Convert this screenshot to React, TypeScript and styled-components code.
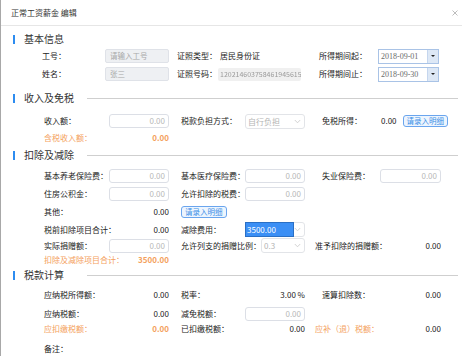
import React from "react";
import styled, { createGlobalStyle, css } from "styled-components";

const Global = createGlobalStyle`
  html, body { margin: 0; padding: 0; background: #ffffff; }
  body { font-family: "Noto Sans CJK SC", "Noto Sans", sans-serif; }
  * { box-sizing: border-box; }
`;

const ORANGE = "#f4a15e";
const BLUE = "#3a8ee6";
const TEXT = "#222";

const Dialog = styled.div`
  width: 462px;
  height: 356px;
  overflow: hidden;
  background: #fff;
  border-left: 1px solid #a8a8a8;
  color: ${TEXT};
  font-size: 8px;
`;

const Header = styled.div`
  height: 26px;
  border-bottom: 1px solid #e6e6e6;
  display: flex;
  align-items: center;
  justify-content: space-between;
  padding: 0 4px 0 10px;
  font-size: 8px;
  color: #333;
`;

const Close = styled.svg`
  width: 6px;
  height: 6px;
`;

const SectionTitle = styled.div<{ $mt: number }>`
  display: flex;
  align-items: center;
  height: 14px;
  margin-top: ${(p) => p.$mt}px;
  padding-left: 12px;
  padding-right: 4px;
`;

const Bar = styled.span`
  width: 2px;
  height: 9px;
  background: #2d8cf0;
  margin-right: 9px;
`;

const TitleText = styled.span`
  width: 63px;
  font-size: 10px;
  line-height: 14px;
  color: #333;
  white-space: nowrap;
`;

const Line = styled.span`
  flex: 1;
  height: 1px;
  background: #cfcfcf;
`;

const InfoRow = styled.div<{ $h: number; $mt?: number }>`
  display: grid;
  grid-template-columns: 104px 64px 49px 86px 74px 61px;
  align-items: center;
  height: ${(p) => p.$h}px;
  margin-top: ${(p) => p.$mt ?? 0}px;
`;

const FormRow = styled.div<{ $h: number; $mt?: number }>`
  display: grid;
  grid-template-columns: 108px 60px 76px 60px 75px 61px;
  align-items: center;
  height: ${(p) => p.$h}px;
  margin-top: ${(p) => p.$mt ?? 0}px;
`;

const Label = styled.span<{ $indent: number; $orange?: boolean }>`
  padding-left: ${(p) => p.$indent}px;
  white-space: nowrap;
  font-size: 8px;
  line-height: 12px;
  color: ${(p) => (p.$orange ? ORANGE : TEXT)};
`;

const Value = styled.span<{ $orange?: boolean; $bold?: boolean }>`
  text-align: right;
  white-space: nowrap;
  font-size: 8px;
  line-height: 12px;
  color: ${(p) => (p.$orange ? ORANGE : TEXT)};
  font-weight: ${(p) => (p.$bold ? 700 : 400)};
`;

const NumberInput = styled.div`
  height: 14px;
  border: 1px solid #dcdfe6;
  border-radius: 3px;
  background: #fff;
  text-align: right;
  padding-right: 3px;
  color: #b8b8b8;
  font-size: 8px;
  line-height: 12px;
`;

const DisabledInput = styled.div`
  height: 14px;
  border: 1px solid #dfe2e8;
  border-radius: 2px;
  background: #eef0f3;
  padding-left: 4px;
  color: #a8a8a8;
  font-size: 7.5px;
  line-height: 12px;
`;

const IdBox = styled.div`
  height: 13px;
  margin-right: 3px;
  border-radius: 2px;
  background: #f0f0f0;
  padding-left: 2px;
  overflow: hidden;
  white-space: nowrap;
  color: #9a9a9a;
  font-size: 7px;
  line-height: 13px;
  filter: blur(0.6px);
`;

const DateBox = styled.div`
  height: 15px;
  border: 1px solid #a9c3e6;
  background: #fff;
  display: flex;
  align-items: stretch;
`;

const DateText = styled.span`
  flex: 1;
  padding-left: 2px;
  font-family: "Liberation Serif", "DejaVu Serif", serif;
  font-size: 8px;
  line-height: 13px;
  color: #6b6b6b;
`;

const DateButton = styled.span`
  width: 11px;
  background: #dde8f6;
  border-left: 1px solid #c5d6ee;
  display: flex;
  align-items: center;
  justify-content: center;
`;

const Triangle = styled.span`
  width: 0;
  height: 0;
  border-left: 2px solid transparent;
  border-right: 2px solid transparent;
  border-top: 2px solid #222;
`;

const SelectBox = styled.div<{ $w?: number }>`
  height: 15px;
  ${(p) => p.$w && css`width: ${p.$w}px; justify-self: end;`}
  border: 1px solid #e2e4e8;
  border-radius: 3px;
  background: #fff;
  display: flex;
  align-items: center;
  justify-content: space-between;
  padding: 0 3px 0 2px;
  color: #b4b4b4;
  font-size: 8px;
  line-height: 13px;
`;

const Chevron = styled.svg`
  width: 7px;
  height: 5px;
`;

const Highlight = styled.span`
  width: 49px;
  height: 15px;
  margin-left: -3px;
  background: #3b8ff5;
  border: 1px solid #2a6fc4;
  color: #fff;
  font-size: 8px;
  line-height: 13px;
  padding-left: 1px;
`;

const DetailButton = styled.button`
  height: 12px;
  padding: 0 3px;
  border: 1px solid #6aa5ee;
  border-radius: 3px;
  background: #edf5fe;
  color: ${BLUE};
  font-family: inherit;
  font-size: 7.5px;
  line-height: 10px;
  white-space: nowrap;
  justify-self: start;
`;

const Inline = styled.div<{ $span: number; $indent: number }>`
  grid-column: span ${(p) => p.$span};
  display: flex;
  align-items: center;
  justify-content: space-between;
  padding-left: ${(p) => p.$indent}px;
`;

const Tail = styled.div`
  display: flex;
  align-items: center;
  gap: 6px;
  padding-left: 1px;
  white-space: nowrap;
`;

const Empty = styled.span``;

const Down = () => (
  <Chevron viewBox="0 0 7 5">
    <path d="M0.8 1 L3.5 3.8 L6.2 1" fill="none" stroke="#c8c8c8" strokeWidth="0.8" />
  </Chevron>
);

const Section = ({ title, mt, line = true }: { title: string; mt: number; line?: boolean }) => (
  <SectionTitle $mt={mt}>
    <Bar />
    <TitleText>{title}</TitleText>
    {line && <Line />}
  </SectionTitle>
);

const DateField = ({ v }: { v: string }) => (
  <DateBox>
    <DateText>{v}</DateText>
    <DateButton>
      <Triangle />
    </DateButton>
  </DateBox>
);

export default function App() {
  return (
    <>
      <Global />
      <Dialog>
        <Header>
          <span>正常工资薪金 编辑</span>
          <Close viewBox="0 0 6 6">
            <path d="M0.5 0.5 L5.5 5.5 M5.5 0.5 L0.5 5.5" stroke="#bdbdbd" strokeWidth="1" />
          </Close>
        </Header>

        <Section title="基本信息" mt={6} line={false} />
        <InfoRow $h={18} $mt={1}>
          <Label $indent={41}>工号：</Label>
          <DisabledInput>请输入工号</DisabledInput>
          <Label $indent={8}>证照类型：</Label>
          <Label $indent={2}>居民身份证</Label>
          <Label $indent={15}>所得期间起：</Label>
          <DateField v="2018-09-01" />
        </InfoRow>
        <InfoRow $h={18}>
          <Label $indent={41}>姓名：</Label>
          <DisabledInput>张三</DisabledInput>
          <Label $indent={8}>证照号码：</Label>
          <IdBox>120214603758461945615</IdBox>
          <Label $indent={15}>所得期间止：</Label>
          <DateField v="2018-09-30" />
        </InfoRow>

        <Section title="收入及免税" mt={8} />
        <FormRow $h={18} $mt={7}>
          <Label $indent={43}>收入额：</Label>
          <NumberInput>0.00</NumberInput>
          <Label $indent={12}>税款负担方式：</Label>
          <SelectBox>
            <span>自行负担</span>
            <Down />
          </SelectBox>
          <Label $indent={17}>免税所得：</Label>
          <Tail>
            <Value>0.00</Value>
            <DetailButton>请录入明细</DetailButton>
          </Tail>
        </FormRow>
        <FormRow $h={16}>
          <Label $indent={43} $orange>含税收入额：</Label>
          <Value $orange $bold>0.00</Value>
        </FormRow>

        <Section title="扣除及减除" mt={2} />
        <FormRow $h={18} $mt={5}>
          <Label $indent={43}>基本养老保险费：</Label>
          <NumberInput>0.00</NumberInput>
          <Label $indent={12}>基本医疗保险费：</Label>
          <NumberInput>0.00</NumberInput>
          <Label $indent={17}>失业保险费：</Label>
          <NumberInput>0.00</NumberInput>
        </FormRow>
        <FormRow $h={18}>
          <Label $indent={43}>住房公积金：</Label>
          <NumberInput>0.00</NumberInput>
          <Label $indent={12}>允许扣除的税费：</Label>
          <NumberInput>0.00</NumberInput>
        </FormRow>
        <FormRow $h={18}>
          <Label $indent={43}>其他：</Label>
          <Value>0.00</Value>
          <Inline $span={2} $indent={12}>
            <DetailButton>请录入明细</DetailButton>
          </Inline>
        </FormRow>
        <FormRow $h={17}>
          <Label $indent={43}>税前扣除项目合计：</Label>
          <Value>0.00</Value>
          <Label $indent={12}>减除费用：</Label>
          <SelectBox>
            <Highlight>3500.00</Highlight>
            <Down />
          </SelectBox>
        </FormRow>
        <FormRow $h={15}>
          <Label $indent={43}>实际捐赠额：</Label>
          <NumberInput>0.00</NumberInput>
          <Inline $span={2} $indent={12}>
            <Label $indent={0}>允许列支的捐赠比例：</Label>
            <SelectBox $w={44}>
              <span>0.3</span>
              <Down />
            </SelectBox>
          </Inline>
          <Label $indent={10}>准予扣除的捐赠额：</Label>
          <Value>0.00</Value>
        </FormRow>
        <FormRow $h={14}>
          <Label $indent={43} $orange>扣除及减除项目合计：</Label>
          <Value $orange $bold>3500.00</Value>
        </FormRow>

        <Section title="税款计算" mt={1} />
        <FormRow $h={18} $mt={4}>
          <Label $indent={43}>应纳税所得额：</Label>
          <Value>0.00</Value>
          <Label $indent={12}>税率：</Label>
          <Value>3.00 %</Value>
          <Label $indent={17}>速算扣除数：</Label>
          <Value>0.00</Value>
        </FormRow>
        <FormRow $h={17} $mt={1}>
          <Label $indent={43}>应纳税额：</Label>
          <Value>0.00</Value>
          <Label $indent={12}>减免税额：</Label>
          <NumberInput>0.00</NumberInput>
          <Empty />
        </FormRow>
        <FormRow $h={14}>
          <Label $indent={43} $orange>应扣缴税额：</Label>
          <Value $orange $bold>0.00</Value>
          <Label $indent={12}>已扣缴税额：</Label>
          <Value>0.00</Value>
          <Label $indent={10} $orange>应补（退）税额：</Label>
          <Value>0.00</Value>
        </FormRow>
        <FormRow $h={18} $mt={4}>
          <Label $indent={43}>备注：</Label>
        </FormRow>
      </Dialog>
    </>
  );
}
